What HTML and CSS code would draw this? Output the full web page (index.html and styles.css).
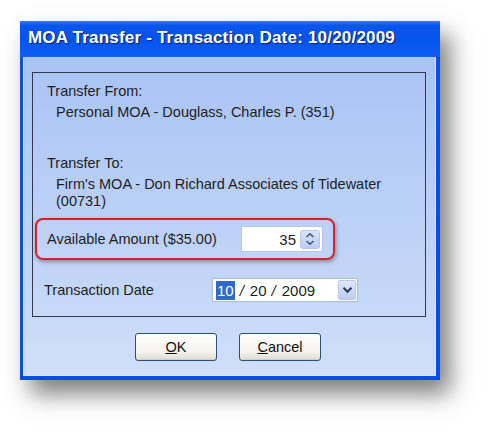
FILE: index.html
```html
<!DOCTYPE html>
<html lang="en">
<head>
  <meta charset="UTF-8">
  <title>MOA Transfer</title>
  <link rel="stylesheet" href="styles.css">
</head>
<body>
  <div class="window">
    <div class="titlebar">MOA Transfer - Transaction Date: 10/20/2009</div>

    <div class="window-body">
      <div class="panel">
        <div class="field-label">Transfer From:</div>
        <div class="field-value">Personal MOA - Douglass, Charles P. (351)</div>

        <div class="field-label to-label">Transfer To:</div>
        <div class="field-value">Firm's MOA - Don Richard Associates of Tidewater<br>(00731)</div>

        <!-- highlighted amount row -->
        <div class="highlight">
          <span class="row-label">Available Amount ($35.00)</span>
          <div class="amount-box">
            <span class="amount">35</span>
            <span class="spinner">
              <svg width="10" height="14" viewBox="0 0 10 14">
                <path d="M1.5 5 L5 1.8 L8.5 5" fill="none" stroke="#4a5a7a" stroke-width="1.6"/>
                <path d="M1.5 9 L5 12.2 L8.5 9" fill="none" stroke="#4a5a7a" stroke-width="1.6"/>
              </svg>
            </span>
          </div>
        </div>

        <div class="date-row">
          <span class="row-label">Transaction Date</span>
          <div class="date-box">
            <span class="date-sel">10</span>
            <span class="date-sep">/</span>
            <span>20</span>
            <span class="date-sep">/</span>
            <span>2009</span>
            <span class="dropdown">
              <svg width="11" height="8" viewBox="0 0 11 8">
                <path d="M1.5 1.8 L5.5 5.8 L9.5 1.8" fill="none" stroke="#2c3a5c" stroke-width="2"/>
              </svg>
            </span>
          </div>
        </div>
      </div>

      <div class="buttons">
        <button class="btn"><u>O</u>K</button>
        <button class="btn"><u>C</u>ancel</button>
      </div>
    </div>
  </div>
</body>
</html>
```

FILE: styles.css
```css
body {
  margin: 0;
  min-height: 436px;
  background: #fff;
  font-family: 'Liberation Sans', Arial, sans-serif;
  font-size: 14.5px;
  color: #1e1e1e;
}

.window {
  margin: 21px 0 0 20px;
  width: 420px;
  height: 359px;
  background: #0a4fe0;
  box-shadow: 10px 14px 22px rgba(0, 0, 0, 0.5);
  display: flex;
  flex-direction: column;
}

.titlebar {
  height: 36px;
  line-height: 34px;
  padding-left: 8px;
  color: #fff;
  font-size: 17px;
  font-weight: bold;
  letter-spacing: 0.2px;
  text-shadow: 1px 1px 1px #0b1f70;
  background: linear-gradient(to bottom, #3a7cf4 0%, #0a55ea 12%, #0654ee 55%, #0b5cf3 90%, #1660ea 100%);
}

.window-body {
  flex: 1;
  margin: 0 4px 4px 3px;
  background: linear-gradient(to bottom, #a8c3f4, #cfdef9);
  box-shadow: inset 1px 0 0 #d8e4fb, inset -1px -1px 0 #dbe6fb;
  padding-top: 15px;
}

.panel {
  margin-left: 9px;
  width: 392px;
  height: 233px;
  border: 1px solid #343a4a;
  padding-top: 10px;
}

.field-label,
.field-value {
  line-height: 17px;
}

.field-label {
  margin-left: 14px;
}

.field-value {
  margin: 4px 0 0 23px;
}

.to-label {
  margin-top: 34px;
}

.highlight {
  margin: 8px 0 0 2px;
  width: 300px;
  height: 42px;
  box-sizing: border-box;
  border: 2px solid #d8202a;
  border-radius: 8px;
  box-shadow: 1px 2px 4px rgba(0, 0, 0, 0.35);
  display: flex;
  align-items: center;
  padding-left: 10px;
}

.highlight .row-label {
  width: 194px;
}

.amount-box {
  width: 82px;
  height: 26px;
  box-sizing: border-box;
  background: #fff;
  border: 1px solid #b9c7de;
  display: flex;
  align-items: center;
  justify-content: flex-end;
  padding-right: 2px;
}

.amount {
  font-size: 15px;
  margin-right: 4px;
}

.spinner {
  width: 18px;
  height: 17px;
  border: 1px solid #b4c6ea;
  border-radius: 3px;
  background: linear-gradient(to bottom, #dbe5fa, #b9ccf3);
  display: flex;
  align-items: center;
  justify-content: center;
}

.date-row {
  margin: 18px 0 0 11px;
  display: flex;
  align-items: center;
}

.date-row .row-label {
  width: 168px;
}

.date-box {
  width: 146px;
  height: 24px;
  box-sizing: border-box;
  background: #fff;
  border: 1px solid #a9bad8;
  display: flex;
  align-items: center;
  padding-left: 3px;
  font-size: 15px;
}

.date-sel {
  background: #316ac5;
  color: #fff;
  padding: 1px 1px;
}

.date-sep {
  font-style: italic;
  margin: 0 6px 0 5px;
}

.date-box .dropdown {
  margin: 0 1px 0 auto;
  width: 18px;
  height: 20px;
  border-radius: 2px;
  background: linear-gradient(to bottom, #dfe8fb, #bccdf2);
  border: 1px solid #b8c8ea;
  box-sizing: border-box;
  display: flex;
  align-items: center;
  justify-content: center;
}

.buttons {
  margin-top: 16px;
  display: flex;
  justify-content: center;
  gap: 22px;
  padding-right: 3px;
}

.btn {
  width: 82px;
  height: 28px;
  font-family: 'Liberation Sans', Arial, sans-serif;
  font-size: 14.5px;
  color: #111;
  border: 1px solid #2c4f7c;
  border-radius: 3px;
  background: linear-gradient(to bottom, #ffffff, #f3f2ec 70%, #dedbcf);
  box-shadow: inset 0 -1px 0 #d6d0bd;
  padding: 0;
}
```
